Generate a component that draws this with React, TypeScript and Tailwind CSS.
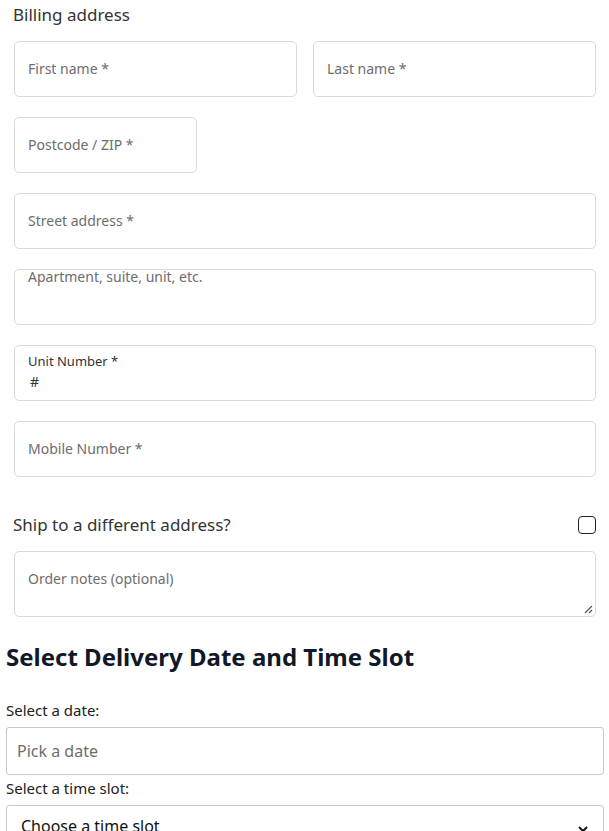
const font = { fontFamily: '"Noto Sans", "Segoe UI", sans-serif' };

function Field({ placeholder, className = "" }: { placeholder: string; className?: string }) {
  return (
    <div className={`h-[56px] rounded-[5px] border border-[#d9d9d9] bg-white px-[13px] flex items-center ${className}`}>
      <span className="text-[14px] text-[#6d6d6d] -mt-[1px]">{placeholder}</span>
    </div>
  );
}

export default function App() {
  return (
    <div className="w-[609px] bg-white text-[#333]" style={font}>
      <div className="px-[14px] pr-[13px]">
        <h3 className="pt-[3px] -ml-[1px] text-[17px] leading-[24px] text-[#333]">Billing address</h3>
        <div className="mt-[14px] flex flex-col gap-[20px]">
          <div className="flex gap-[16px]">
            <Field placeholder="First name *" className="flex-1" />
            <Field placeholder="Last name *" className="flex-1" />
          </div>
          <Field placeholder="Postcode / ZIP *" className="w-[183px]" />
          <Field placeholder="Street address *" />
          <div className="h-[56px] rounded-[5px] border border-[#d9d9d9] px-[13px]">
            <div className="relative -top-[1px] text-[14px] leading-[16px] text-[#6d6d6d]">Apartment, suite, unit, etc.</div>
          </div>
          <div className="h-[56px] rounded-[5px] border border-[#d9d9d9] px-[13px] pt-[7px]">
            <div className="text-[13px] leading-[16px] text-[#333]">Unit Number *</div>
            <div className="mt-[5px] text-[14px] leading-[16px] text-[#333] pl-[2px]">#</div>
          </div>
          <Field placeholder="Mobile Number *" />
        </div>
        <div className="mt-[36px] flex items-center justify-between -ml-[1px]">
          <span className="text-[17px] leading-[24px] text-[#333]">Ship to a different address?</span>
          <span className="w-[18px] h-[18px] rounded-[4px] border-[1.5px] border-[#222]" />
        </div>
        <div className="mt-[14px] relative h-[66px] rounded-[5px] border border-[#d9d9d9] px-[13px] pt-[14px]">
          <span className="text-[14px] text-[#6d6d6d]">Order notes (optional)</span>
          <svg className="absolute right-[2px] bottom-[2px]" width="10" height="10" viewBox="0 0 10 10">
            <path d="M9 2L2 9M9 6L6 9" stroke="#555" strokeWidth="1.2" />
          </svg>
        </div>
      </div>
      <div className="px-[6px]">
        <h2 className="mt-[24px] text-[24px] leading-[32px] font-bold text-[#111827]">Select Delivery Date and Time Slot</h2>
        <div className="mt-[27px] text-[15px] leading-[20px] text-[#222]">Select a date:</div>
        <div className="mt-[7px] h-[48px] w-[598px] rounded-[3px] border border-[#c8c8c8] px-[10px] flex items-center">
          <span className="text-[16px] text-[#6d6d6d]">Pick a date</span>
        </div>
        <div className="mt-[3px] text-[15px] leading-[20px] text-[#222]">Select a time slot:</div>
        <div className="mt-[7px] h-[48px] w-[598px] rounded-[3px] border border-[#c8c8c8] px-[14px] pt-[8px] flex items-start justify-between">
          <span className="text-[16px] leading-[24px] text-[#111]">Choose a time slot</span>
          <svg width="12" height="12" viewBox="0 0 12 12" className="mt-[9px]">
            <path d="M2 4l4 4 4-4" fill="none" stroke="#111" strokeWidth="2" />
          </svg>
        </div>
      </div>
    </div>
  );
}
